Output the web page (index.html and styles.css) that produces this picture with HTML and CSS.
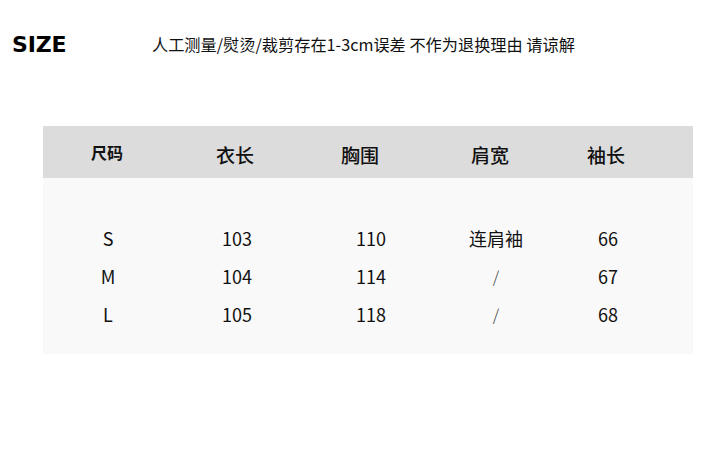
FILE: index.html
```html
<!DOCTYPE html>
<html lang="zh">
<head>
<meta charset="utf-8">
<link rel="stylesheet" href="styles.css">
</head>
<body>
<div class="page">
  <div class="topbar">
    <div class="title">SIZE</div>
    <div class="note">人工测量/熨烫/裁剪存在1-3cm误差 不作为退换理由 请谅解</div>
  </div>
  <div class="table">
    <div class="head">
      <div class="hc h1">尺码</div>
      <div class="hc">衣长</div>
      <div class="hc">胸围</div>
      <div class="hc">肩宽</div>
      <div class="hc">袖长</div>
    </div>
    <div class="body">
      <div class="row">
        <div class="c">S</div><div class="c">103</div><div class="c">110</div><div class="c">连肩袖</div><div class="c">66</div>
      </div>
      <div class="row">
        <div class="c">M</div><div class="c">104</div><div class="c">114</div><div class="c slash">/</div><div class="c">67</div>
      </div>
      <div class="row">
        <div class="c">L</div><div class="c">105</div><div class="c">118</div><div class="c slash">/</div><div class="c">68</div>
      </div>
    </div>
  </div>
</div>
</body>
</html>
```
FILE: styles.css
```css
html, body {
  margin: 0;
  padding: 0;
  background: #ffffff;
}
.page {
  width: 725px;
  height: 449px;
  font-family: "Liberation Sans", "Noto Sans CJK SC", sans-serif;
  color: #111;
}
.topbar {
  display: flex;
  align-items: center;
  height: 90px;
  padding-left: 12px;
  box-sizing: border-box;
  padding-bottom: 2px;
}
.title {
  font-family: "DejaVu Sans", sans-serif;
  font-weight: bold;
  font-size: 22px;
  letter-spacing: -0.2px;
  color: #000;
  width: 140px;
}
.note {
  font-family: "Noto Sans CJK SC", sans-serif;
  font-size: 16.2px;
  color: #111;
}
.table {
  margin-top: 36px;
  margin-left: 43px;
  width: 650px;
}
.head {
  display: grid;
  grid-template-columns: 128px 128px 122px 138px 94px 1fr;
  height: 52px;
  align-items: center;
  background: #dcdcdc;
}
.hc {
  text-align: center;
  font-family: "Noto Sans CJK SC", sans-serif;
  font-weight: 500;
  font-size: 19px;
  color: #111;
  padding-top: 4px;
}
.hc.h1 {
  font-weight: bold;
  font-size: 16px;
  padding-top: 0;
}
.body {
  background: #f9f9f9;
  padding: 41px 0 21px;
}
.row {
  display: grid;
  grid-template-columns: 130px 128px 140px 110px 114px 1fr;
  height: 38px;
  align-items: center;
}
.c {
  text-align: center;
  font-family: "Noto Sans CJK SC", sans-serif;
  font-size: 18px;
  color: #111;
}
.c.slash {
  font-weight: 300;
  font-size: 16px;
  color: #333;
}
```
